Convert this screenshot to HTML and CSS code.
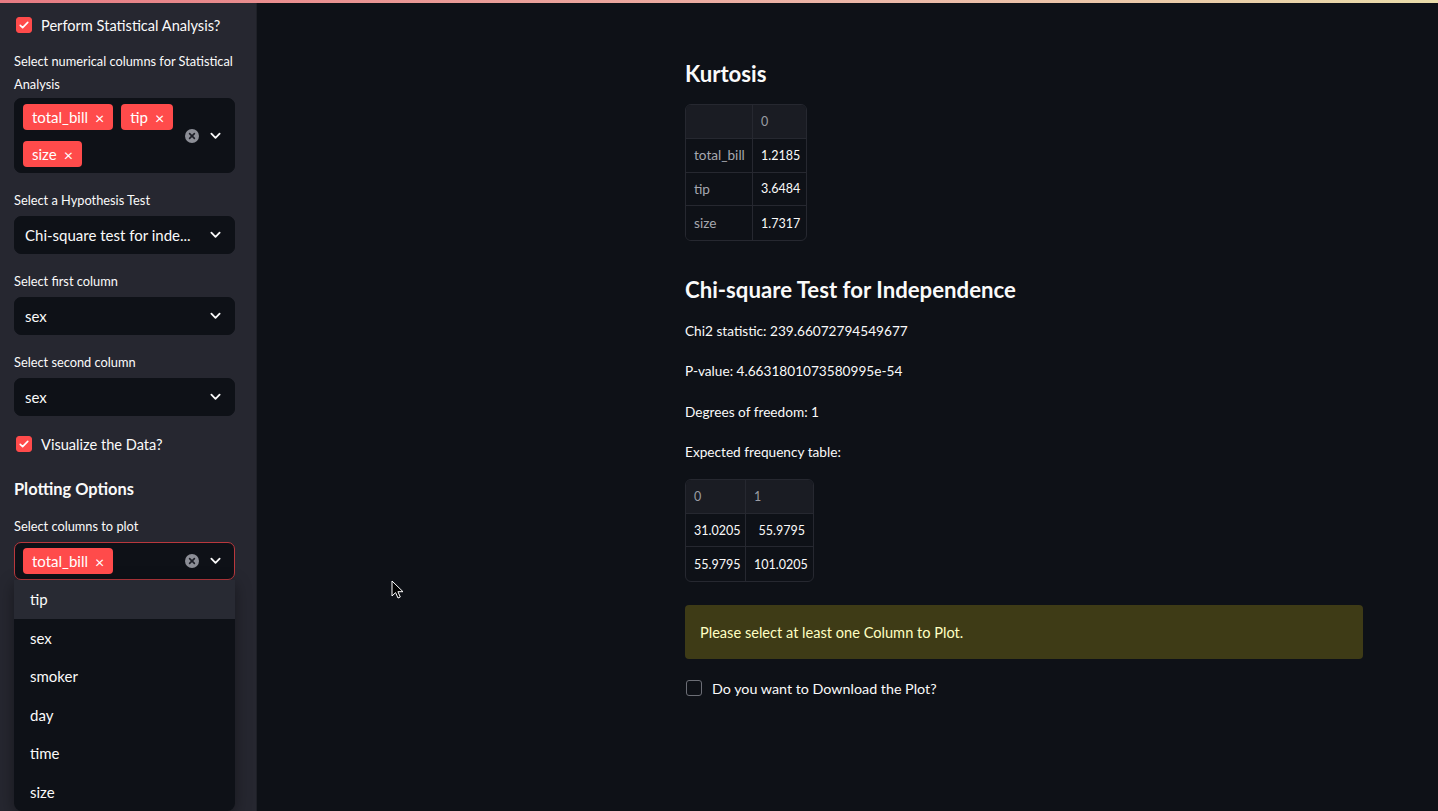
FILE: index.html
```html
<!DOCTYPE html>
<html lang="en">
<head>
<meta charset="utf-8">
<title>Statistical Analysis</title>
<link rel="stylesheet" href="styles.css">
</head>
<body>
<div class="decoration"></div>
<aside class="sidebar">
  <label class="check-row first">
    <span class="checkbox checked"><svg viewBox="0 0 16 16" width="12" height="12"><path d="M3 8.5l3.2 3L13 4.5" fill="none" stroke="#fff" stroke-width="2.2" stroke-linecap="round" stroke-linejoin="round"/></svg></span>
    <span class="check-text">Perform Statistical Analysis?</span>
  </label>

  <div class="widget">
    <div class="label two-line">Select numerical columns for Statistical Analysis</div>
    <div class="box multi tall">
      <div class="tags">
        <span class="tag">total_bill <span class="x">×</span></span>
        <span class="tag">tip <span class="x">×</span></span>
        <span class="tag">size <span class="x">×</span></span>
      </div>
      <div class="controls">
        <span class="clear"><svg viewBox="0 0 14 14" width="14" height="14"><circle cx="7" cy="7" r="7" fill="#8c8e96"/><path d="M4.6 4.6l4.8 4.8M9.4 4.6l-4.8 4.8" stroke="#1d1f27" stroke-width="1.6" stroke-linecap="round"/></svg></span>
        <span class="chev"><svg viewBox="0 0 12 8" width="11" height="8"><path d="M1.5 1.5L6 6l4.5-4.5" fill="none" stroke="#fafafa" stroke-width="2" stroke-linecap="round" stroke-linejoin="round"/></svg></span>
      </div>
    </div>
  </div>

  <div class="widget">
    <div class="label">Select a Hypothesis Test</div>
    <div class="box single">
      <span class="value">Chi-square test for inde...</span>
      <span class="chev"><svg viewBox="0 0 12 8" width="11" height="8"><path d="M1.5 1.5L6 6l4.5-4.5" fill="none" stroke="#fafafa" stroke-width="2" stroke-linecap="round" stroke-linejoin="round"/></svg></span>
    </div>
  </div>

  <div class="widget">
    <div class="label">Select first column</div>
    <div class="box single">
      <span class="value">sex</span>
      <span class="chev"><svg viewBox="0 0 12 8" width="11" height="8"><path d="M1.5 1.5L6 6l4.5-4.5" fill="none" stroke="#fafafa" stroke-width="2" stroke-linecap="round" stroke-linejoin="round"/></svg></span>
    </div>
  </div>

  <div class="widget">
    <div class="label">Select second column</div>
    <div class="box single">
      <span class="value">sex</span>
      <span class="chev"><svg viewBox="0 0 12 8" width="11" height="8"><path d="M1.5 1.5L6 6l4.5-4.5" fill="none" stroke="#fafafa" stroke-width="2" stroke-linecap="round" stroke-linejoin="round"/></svg></span>
    </div>
  </div>

  <label class="check-row viz">
    <span class="checkbox checked"><svg viewBox="0 0 16 16" width="12" height="12"><path d="M3 8.5l3.2 3L13 4.5" fill="none" stroke="#fff" stroke-width="2.2" stroke-linecap="round" stroke-linejoin="round"/></svg></span>
    <span class="check-text">Visualize the Data?</span>
  </label>

  <h4 class="side-heading">Plotting Options</h4>

  <div class="widget open">
    <div class="label">Select columns to plot</div>
    <div class="box multi focused">
      <div class="tags">
        <span class="tag">total_bill <span class="x">×</span></span>
      </div>
      <div class="controls">
        <span class="clear"><svg viewBox="0 0 14 14" width="14" height="14"><circle cx="7" cy="7" r="7" fill="#8c8e96"/><path d="M4.6 4.6l4.8 4.8M9.4 4.6l-4.8 4.8" stroke="#1d1f27" stroke-width="1.6" stroke-linecap="round"/></svg></span>
        <span class="chev"><svg viewBox="0 0 12 8" width="11" height="8"><path d="M1.5 1.5L6 6l4.5-4.5" fill="none" stroke="#fafafa" stroke-width="2" stroke-linecap="round" stroke-linejoin="round"/></svg></span>
      </div>
    </div>
    <ul class="menu">
      <li class="active">tip</li>
      <li>sex</li>
      <li>smoker</li>
      <li>day</li>
      <li>time</li>
      <li>size</li>
    </ul>
  </div>
</aside>

<main class="main">
  <div class="block">
    <h3 class="heading first-h">Kurtosis</h3>
    <table class="df kurt">
      <colgroup><col class="c1"><col></colgroup>
      <thead><tr><th class="idx"></th><th>0</th></tr></thead>
      <tbody>
        <tr><th class="idx">total_bill</th><td>1.2185</td></tr>
        <tr><th class="idx">tip</th><td>3.6484</td></tr>
        <tr><th class="idx">size</th><td>1.7317</td></tr>
      </tbody>
    </table>

    <h3 class="heading">Chi-square Test for Independence</h3>
    <p class="para">Chi2 statistic: 239.66072794549677</p>
    <p class="para">P-value: 4.6631801073580995e-54</p>
    <p class="para">Degrees of freedom: 1</p>
    <p class="para last">Expected frequency table:</p>

    <table class="df freq">
      <colgroup><col class="c1"><col></colgroup>
      <thead><tr><th>0</th><th>1</th></tr></thead>
      <tbody>
        <tr><td>31.0205</td><td>55.9795</td></tr>
        <tr><td>55.9795</td><td>101.0205</td></tr>
      </tbody>
    </table>

    <div class="alert">Please select at least one Column to Plot.</div>

    <label class="check-row main-check">
      <span class="checkbox"></span>
      <span class="check-text">Do you want to Download the Plot?</span>
    </label>
  </div>
  <svg class="cursor" viewBox="0 0 12 19" width="12" height="19"><path d="M1 1v15l3.6-3.4 2.4 5.4 2.3-1-2.4-5.3H12z" fill="#000" stroke="#fff" stroke-width="1" stroke-linejoin="round"/></svg>
</main>
</body>
</html>
```

FILE: styles.css
```css
* { box-sizing: border-box; }

html, body {
  margin: 0;
  padding: 0;
  height: 811px;
  overflow: hidden;
}

body {
  display: flex;
  background: #0e1117;
  color: #fafafa;
  font-family: Lato, "Source Sans Pro", "Liberation Sans", sans-serif;
  position: relative;
}

.decoration {
  position: absolute;
  top: 0;
  left: 0;
  right: 0;
  height: 3px;
  background: linear-gradient(90deg, #e77b83 0%, #ecb7a8 60%, #e9dcaa 100%);
  z-index: 5;
}

/* ---------- sidebar ---------- */
.sidebar {
  width: 257px;
  flex: none;
  background: #262730;
  padding: 13px 21px 0 14px;
  border-right: 1px solid #1e2027;
}

.check-row {
  display: flex;
  align-items: center;
  gap: 9px;
  height: 24px;
  font-size: 14.6px;
  color: #fafafa;
}
.check-row.first { margin-bottom: 13px; }
.check-row.viz { margin-top: 2px; }

.checkbox {
  width: 16px;
  height: 16px;
  border-radius: 3px;
  margin-left: 2px;
  display: flex;
  align-items: center;
  justify-content: center;
  border: 1px solid #8a8c94;
  flex: none;
}
.checkbox.checked {
  background: #ff4b4b;
  border-color: #ff4b4b;
}

.widget { margin-bottom: 16px; }

.label {
  font-size: 12.8px;
  line-height: 22px;
  color: #fafafa;
  margin-bottom: 5px;
}
.label.two-line { line-height: 23px; margin-bottom: 2px; }

.box {
  background: #0e1117;
  border-radius: 7px;
  border: 1px solid #0e1117;
  display: flex;
  align-items: center;
  justify-content: space-between;
}
.box.single {
  height: 38px;
  padding: 0 13px 0 10px;
}
.value { font-size: 15px; color: #fafafa; }

.box.multi {
  min-height: 38px;
  padding: 5px 13px 5px 8px;
}
.box.focused { border-color: #b9383d; }

.tags {
  display: flex;
  flex-wrap: wrap;
  row-gap: 11px;
  column-gap: 8px;
  width: 160px;
}
.tag {
  display: inline-flex;
  align-items: center;
  height: 26px;
  padding: 0 9px;
  background: #ff4b4b;
  border-radius: 4px;
  font-size: 15px;
  color: #fff;
}
.tag .x {
  margin-left: 7px;
  font-size: 16px;
}

.controls {
  display: flex;
  align-items: center;
  gap: 11px;
}
.clear, .chev { display: flex; align-items: center; }

.side-heading {
  margin: 21px 0 14px;
  font-size: 16.4px;
  font-weight: 700;
  line-height: 24px;
  color: #fafafa;
}

.widget.open { margin-bottom: 0; }

.menu {
  list-style: none;
  margin: 0;
  padding: 0;
  background: #0e1117;
  border-radius: 0 0 8px 8px;
  box-shadow: 0 4px 16px rgba(0,0,0,0.4);
  overflow: hidden;
}
.menu li {
  height: 38.5px;
  line-height: 38.5px;
  padding-left: 16px;
  font-size: 15px;
  color: #fafafa;
}
.menu li.active { background: #282a33; }

/* ---------- main ---------- */
.main {
  flex: 1;
  position: relative;
  padding: 58px 0 0 428px;
}

.block { width: 678px; }

.heading {
  margin: 0 0 14px;
  font-size: 22.2px;
  font-weight: 700;
  line-height: 32px;
  color: #fafafa;
}
.df + .heading { margin-top: 33px; margin-bottom: 14px; }

.para {
  margin: 0 0 18.3px;
  font-size: 13.65px;
  line-height: 22px;
  color: #fafafa;
}
.para.last { margin-bottom: 16px; }

.df {
  border-collapse: separate;
  border-spacing: 0;
  table-layout: fixed;
  border: 1px solid #262830;
  border-radius: 6px;
  overflow: hidden;
  font-size: 12.5px;
}
.df th, .df td {
  height: 33.75px;
  padding: 0 8px;
  border-right: 1px solid #262830;
  border-bottom: 1px solid #262830;
  font-weight: 400;
  white-space: nowrap;
}
.df tr > *:last-child { border-right: none; }
.df tbody tr:last-child > * { border-bottom: none; }
.df thead th {
  background: #1a1c23;
  color: #9a9ca4;
  text-align: left;
}
.df tbody th.idx { color: #a6a8b0; text-align: left; background: #0e1117; font-size: 13.6px; }
.df td { color: #fafafa; text-align: right; }

.kurt { width: 122px; }
.kurt .c1 { width: 67px; }

.freq { width: 129px; }
.freq .c1 { width: 60px; }

.alert {
  margin-top: 23px;
  height: 54px;
  padding: 0 15px;
  display: flex;
  align-items: center;
  background: #3e3b16;
  border-radius: 4px;
  font-size: 14.6px;
  color: #ffffc2;
}

.main-check {
  margin-top: 17px;
  gap: 10px;
  font-size: 14.3px;
}
.main-check .checkbox {
  margin-left: 1px;
  border-color: #6c6e76;
}

.cursor {
  position: absolute;
  left: 134px;
  top: 580px;
}
```
